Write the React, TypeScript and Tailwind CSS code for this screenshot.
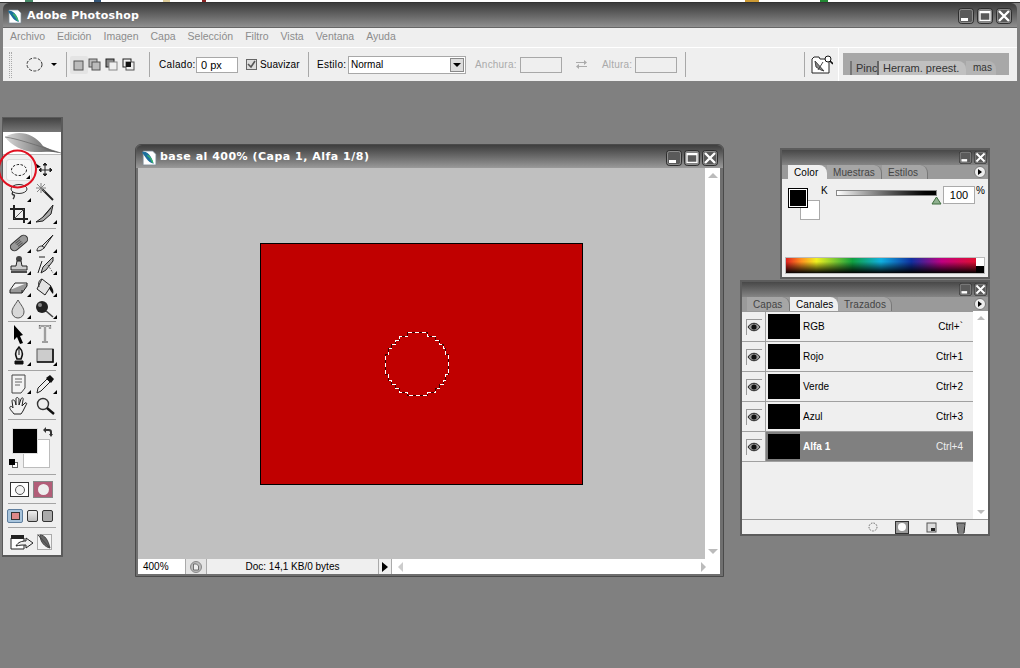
import React from 'react';

const ui = "font-['Liberation_Sans',Arial,sans-serif]";
const menus = ['Archivo', 'Edición', 'Imagen', 'Capa', 'Selección', 'Filtro', 'Vista', 'Ventana', 'Ayuda'];

const channels = [
  { name: 'RGB', key: 'Ctrl+`' },
  { name: 'Rojo', key: 'Ctrl+1' },
  { name: 'Verde', key: 'Ctrl+2' },
  { name: 'Azul', key: 'Ctrl+3' },
  { name: 'Alfa 1', key: 'Ctrl+4', active: true },
];

const WinButton: React.FC<{ kind: 'min' | 'max' | 'close'; size?: number }> = ({ kind, size = 16 }) => (
  <svg width={size} height={size} viewBox="0 0 16 16" className="shrink-0">
    <rect x="0.5" y="0.5" width="15" height="15" rx="3" fill="#5a5a5a" stroke="#2e2e2e" />
    <rect x="1.5" y="1.5" width="13" height="13" rx="2" fill="none" stroke="#8c8c8c" />
    {kind === 'min' && <rect x="3" y="10" width="7" height="3" fill="#fff" />}
    {kind === 'max' && <path d="M3 3.5h10v9H3z M3 4.5h10" fill="none" stroke="#fff" strokeWidth="1.4" />}
    {kind === 'close' && <path d="M3 3l10 10M13 3L3 13" stroke="#fff" strokeWidth="2.4" />}
  </svg>
);

const AppIcon: React.FC<{ size?: number }> = ({ size = 15 }) => (
  <svg width={size} height={size} viewBox="0 0 15 15" className="shrink-0">
    <path d="M2 1h9l3 3v10H2z" fill="#fff" stroke="#7c8c98" strokeWidth="0.7" />
    <path d="M1 2c3-1 6 1 8 4s2 5 3 7c-3-1-5-2-7-5S2 4 1 2z" fill="#1d6f9d" />
    <path d="M6 5c2 1 4 4 5 7" stroke="#39b36a" strokeWidth="1.4" fill="none" />
  </svg>
);

const Tool: React.FC<{ more?: boolean; selected?: boolean; children: React.ReactNode }> = ({ more = true, selected, children }) => (
  <div className={`relative w-[26px] h-[22px] flex items-center justify-center ${selected ? 'bg-[#f7f7f7] border border-[#dcdcdc] rounded-[3px]' : ''}`}>
    <svg width="22" height="20" viewBox="0 0 22 20">{children}</svg>
    {more && <span className="absolute right-[1px] bottom-[1px] w-0 h-0 border-l-[4px] border-l-transparent border-b-[4px] border-b-black" />}
  </div>
);

const Sep: React.FC<{ className: string }> = ({ className }) => <div className={`h-px bg-[#a4a4a4] mx-[2px] ${className}`} />;

const Toolbox = () => (
  <div className="absolute left-[2px] top-[117px] w-[61px] h-[440px] border border-[#5a5a5a] border-r-[2px] border-b-[2px] bg-[#efefef]">
    <div className="h-[14px] bg-gradient-to-b from-[#444] to-[#777]" />
    <div className="h-[23px] bg-white border-b border-[#bbb]">
      <svg width="59" height="23" viewBox="0 0 59 23">
        <defs>
          <linearGradient id="fth" x1="0" x2="1">
            <stop offset="0" stopColor="#d8d8d8" />
            <stop offset="1" stopColor="#4c4c4c" />
          </linearGradient>
        </defs>
        <path d="M2 5C14-2 30 0 40 14c5 3 12 5 18 7C46 19 40 20 32 20 20 20 8 13 2 5z" fill="url(#fth)" />
        <path d="M2 5c14 2 30 8 56 16" stroke="#666" strokeWidth="0.7" fill="none" />
      </svg>
    </div>
    <div className="px-[3px] pt-[4px]">
      <div className="grid grid-cols-2">
        <Tool selected>
          <ellipse cx="11" cy="10" rx="7.5" ry="5.5" fill="none" stroke="#222" strokeDasharray="2.5 1.5" />
        </Tool>
        <Tool more={false}>
          <path d="M1 3l6 4-4 1z" fill="#000" />
          <path d="M11 4v11M6 10h11M11 3l-2 2h4zM11 16l-2-2h4zM5 10l2-2v4zM18 10l-2-2v4z" stroke="#222" fill="#222" strokeWidth="1" />
        </Tool>
        <Tool>
          <ellipse cx="11" cy="7" rx="8" ry="4.5" fill="none" stroke="#333" />
          <path d="M5 10c-2 2 0 3 1 3s0 3-1 4" fill="none" stroke="#333" strokeWidth="1.4" />
        </Tool>
        <Tool more={false}>
          <path d="M8 7l11 11" stroke="#222" strokeWidth="2" />
          <path d="M7 1v10M2 6h10M3 2l8 8M11 2l-8 8" stroke="#777" strokeWidth="0.9" />
        </Tool>
        <Tool>
          <path d="M6 1v14h14M2 5h14v14" fill="none" stroke="#222" strokeWidth="2" />
          <path d="M6 15L16 5" stroke="#555" />
        </Tool>
        <Tool>
          <path d="M2 18l7-5 10-12-2 9-8 7z" fill="#aaa" stroke="#222" />
          <path d="M9 13l8-9" stroke="#222" />
        </Tool>
      </div>
      <Sep className="mt-[3px] mb-[3px]" />
      <div className="grid grid-cols-2">
        <Tool>
          <g transform="rotate(-40 11 10)">
            <rect x="1" y="6" width="20" height="8" rx="4" fill="#999" stroke="#333" />
            <path d="M8 8h6M8 10h6M8 12h6" stroke="#555" />
          </g>
        </Tool>
        <Tool>
          <path d="M3 18c0-4 3-5 5-5l11-11-9 13c-2 2-4 3-7 3z" fill="#ddd" stroke="#222" />
          <path d="M8 13l3 2" stroke="#222" />
        </Tool>
        <Tool>
          <circle cx="11" cy="4" r="3" fill="#444" />
          <path d="M9 6h4l1 5h5v4H3v-4h5z" fill="#ccc" stroke="#222" />
          <path d="M3 17h16" stroke="#222" strokeWidth="1.6" />
        </Tool>
        <Tool>
          <path d="M5 2h6M8 6l-4 12M19 2L9 12l-2 6 5-3 7-9z" fill="#bbb" stroke="#222" />
          <path d="M14 10l5 8" stroke="#555" strokeDasharray="1.5 1.5" />
        </Tool>
        <Tool>
          <path d="M2 13l5-7h12l-5 7z" fill="#f5f5f5" stroke="#222" />
          <path d="M2 13v3h12l5-7V6M14 13v3" fill="#999" stroke="#222" />
        </Tool>
        <Tool>
          <path d="M8 2l9 7-6 9-8-6z" fill="#e4e4e4" stroke="#222" />
          <path d="M8 2C5 3 4 6 5 10" stroke="#222" fill="none" />
          <path d="M17 9c2 3 3 5 2 8-2-2-3-4-4-6z" fill="#111" />
        </Tool>
        <Tool>
          <path d="M10 1c3 5 6 8 6 12a6 6 0 0 1-12 0c0-4 3-7 6-12z" fill="#d8d8d8" stroke="#555" />
        </Tool>
        <Tool>
          <circle cx="8" cy="8" r="6" fill="#222" />
          <circle cx="6" cy="6" r="2" fill="#888" />
          <path d="M12 12l7 6" stroke="#444" strokeWidth="1.6" />
        </Tool>
      </div>
      <Sep className="mt-[1px] mb-[1px]" />
      <div className="grid grid-cols-2">
        <Tool>
          <path d="M6 1l9 10-3 1 3 7-3 1-3-7-3 3z" fill="#000" />
        </Tool>
        <Tool more={false}>
          <path d="M6 5V2h10v3M11 2v15M8 18h6" fill="none" stroke="#666" strokeWidth="2.2" />
          <path d="M6 5V2h10v3M11 2v15M8 18h6" fill="none" stroke="#f4f4f4" strokeWidth="0.8" />
        </Tool>
        <Tool>
          <path d="M11 1c3 3 4 6 3 9l-1 3H9l-1-3c-1-3 0-6 3-9z" fill="none" stroke="#111" strokeWidth="1.6" />
          <path d="M11 1v8M7 15h8v3H7z" fill="#111" stroke="#111" />
        </Tool>
        <Tool>
          <rect x="3" y="3" width="16" height="13" fill="#ccc" stroke="#555" />
          <path d="M19 3v13H3" stroke="#111" strokeWidth="1.6" fill="none" />
        </Tool>
      </div>
      <Sep className="mt-[3px] mb-[2px]" />
      <div className="grid grid-cols-2">
        <Tool>
          <path d="M4 1h13v13l-4 5H4z" fill="#f3f3f3" stroke="#444" />
          <path d="M7 5h7M7 8h7M7 11h5" stroke="#666" />
        </Tool>
        <Tool>
          <path d="M3 19l1-5 9-9 3 3-9 9z" fill="#eee" stroke="#222" />
          <path d="M12 4l4-3 4 4-3 4z" fill="#111" />
        </Tool>
        <Tool more={false}>
          <path d="M6 18c-2-3-5-5-4-7s3 1 3 1L4 5c0-2 2-1 3 0l1 4V3c0-2 2-2 3 0v6l2-6c1-2 3-1 2 1l-1 6 3-3c2-1 2 1 1 2l-3 6-2 3z" fill="#f2f2f2" stroke="#222" />
        </Tool>
        <Tool more={false}>
          <circle cx="9" cy="8" r="5.5" fill="#eee" stroke="#333" strokeWidth="1.4" />
          <path d="M13 12l7 6" stroke="#111" strokeWidth="2.4" />
        </Tool>
      </div>
      <Sep className="mt-[2px] mb-[3px]" />
      <div className="relative h-[50px]">
        <div className="absolute left-[17px] top-[16px] w-[27px] h-[29px] bg-white border border-[#bcbcbc]" />
        <div className="absolute left-[6px] top-[5px] w-[26px] h-[26px] bg-black border border-[#ddd]" />
        <svg className="absolute left-[35px] top-[3px]" width="12" height="12" viewBox="0 0 12 12">
          <path d="M2 4l3-3v2h3a3 3 0 0 1 3 3v2h1l-2 3-2-3h1V6c0-1-1-1-2-1H5v2z" fill="#333" />
        </svg>
        <div className="absolute left-[6px] top-[39px] w-[6px] h-[6px] bg-white border border-[#666]" />
        <div className="absolute left-[3px] top-[36px] w-[6px] h-[6px] bg-black" />
      </div>
      <Sep className="mt-[1px] mb-[6px]" />
      <div className="flex items-center gap-[4px] pl-[4px]">
        <div className="w-[19px] h-[15px] bg-white border border-[#333] flex items-center justify-center">
          <span className="w-[10px] h-[10px] rounded-full border border-[#555] bg-[#f4f4f4]" />
        </div>
        <div className="w-[20px] h-[17px] bg-[#b25d78] border border-[#888] flex items-center justify-center">
          <span className="w-[11px] h-[11px] rounded-full bg-[#eee]" />
        </div>
      </div>
      <Sep className="mt-[5px] mb-[5px]" />
      <div className="flex items-center pl-[1px] h-[14px]">
        <div className="w-[16px] h-[14px] bg-[#a8c4dc] border border-[#5f7f9f] rounded-[2px] flex items-center justify-center">
          <span className="w-[9px] h-[8px] bg-[#d88] border border-[#333]" />
        </div>
        <div className="w-[11px] h-[12px] ml-[4px] rounded-[2px] border border-[#333] bg-gradient-to-b from-[#eee] to-[#bbb]" />
        <div className="w-[11px] h-[12px] ml-[4px] rounded-[2px] border border-[#333] bg-[#aaa]" />
      </div>
      <Sep className="mt-[4px] mb-[6px]" />
      <div className="flex items-center pl-[4px]">
        <svg width="25" height="16" viewBox="0 0 25 16">
          <path d="M1 4h13v11H1z" fill="#fff" stroke="#222" />
          <path d="M1 1h13v4H1z" fill="#222" />
          <path d="M6 12c2-4 6-5 10-5V4l7 5-7 5v-3c-4 0-6 0-10 1z" fill="#eee" stroke="#222" />
        </svg>
        <svg className="ml-[2px]" width="15" height="16" viewBox="0 0 15 16">
          <rect x="0.5" y="0.5" width="14" height="15" fill="#f4f4f4" stroke="#aaa" />
          <path d="M1 1l12 13M3 1c5 0 8 5 10 13C8 13 3 8 3 1z" fill="#666" stroke="#444" />
        </svg>
      </div>
    </div>
  </div>
);

const MenuIcon = () => (
  <span className="w-[12px] h-[12px] rounded-full bg-[#eee] border border-[#777] flex items-center justify-center">
    <span className="w-0 h-0 border-y-[3px] border-y-transparent border-l-[4px] border-l-black" />
  </span>
);

const Tab: React.FC<{ label: string; active?: boolean; width: string }> = ({ label, active, width }) => (
  <div
    className={`${width} h-full flex items-center pl-[6px] text-[10px] tracking-[0.1px] rounded-tr-[8px] ${active ? 'bg-[#efefef] text-black' : 'bg-[#a6a6a6] text-[#444] border-r border-[#777]'}`}
  >
    {label}
  </div>
);

const PanelTitle = () => (
  <div className="h-[15px] bg-gradient-to-b from-[#484848] to-[#858585] flex items-center justify-end gap-[2px] pr-[1px] shrink-0">
    <WinButton kind="min" size={13} />
    <WinButton kind="close" size={13} />
  </div>
);

const ColorPanel = () => (
  <div className="absolute left-[780px] top-[148px] w-[210px] h-[131px] border-2 border-[#5c5c5c] bg-[#efefef] flex flex-col">
    <PanelTitle />
    <div className="h-[14px] bg-[#9a9a9a] flex items-stretch pl-[6px] pr-[2px] shrink-0">
      <Tab label="Color" active width="w-[39px]" />
      <Tab label="Muestras" width="w-[55px]" />
      <Tab label="Estilos" width="w-[46px]" />
      <div className="ml-auto self-center">
        <MenuIcon />
      </div>
    </div>
    <div className="relative flex-1">
      <div className="absolute left-[18px] top-[21px] w-[20px] h-[20px] bg-white border border-[#aaa]" />
      <div className="absolute left-[6px] top-[9px] w-[20px] h-[20px] bg-black border border-black outline outline-1 outline-white -outline-offset-2" />
      <span className="absolute left-[39px] top-[6px] text-[10px] leading-[12px] text-black">K</span>
      <div className="absolute left-[54px] top-[11px] w-[101px] h-[6px] border border-[#888] bg-gradient-to-r from-white to-black" />
      <svg className="absolute left-[149px] top-[17px]" width="11" height="9" viewBox="0 0 11 9">
        <path d="M5.5 1L10 8H1z" fill="#8fb08f" stroke="#3d6d3d" />
      </svg>
      <div className="absolute left-[161px] top-[7px] w-[32px] h-[18px] bg-white border border-[#aaa] text-[11px] leading-[16px] text-center text-black">100</div>
      <span className="absolute left-[194px] top-[6px] text-[10px] leading-[12px] text-black">%</span>
      <div className="absolute left-[3px] top-[78px] w-[200px] h-[17px] border border-[#bbb] flex">
        <div className="flex-1 bg-[linear-gradient(to_bottom,transparent_0%,transparent_25%,rgba(0,0,0,0.97)_100%),linear-gradient(to_right,#e02020,#ff9020_8%,#f0f020_16%,#10a040_35%,#10b0e0_50%,#1030a0_66%,#c00080_82%,#e01030)]" />
        <div className="w-[8px] flex flex-col">
          <div className="flex-1 bg-white" />
          <div className="flex-1 bg-black" />
        </div>
      </div>
    </div>
  </div>
);

const Eye = () => (
  <div className="w-[16px] h-[16px] border-l border-t border-[#999] flex items-center justify-center">
    <svg width="14" height="10" viewBox="0 0 14 10">
      <path d="M1 5c3-5 9-5 12 0-3 5-9 5-12 0z" fill="#999" stroke="#222" />
      <circle cx="7" cy="5" r="2.6" fill="#111" />
    </svg>
  </div>
);

const ChannelsPanel = () => (
  <div className="absolute left-[740px] top-[280px] w-[250px] h-[256px] border-2 border-[#5c5c5c] bg-[#efefef] flex flex-col">
    <PanelTitle />
    <div className="h-[14px] bg-[#9a9a9a] flex items-stretch pl-[5px] pr-[2px] shrink-0">
      <Tab label="Capas" width="w-[43px]" />
      <Tab label="Canales" active width="w-[48px]" />
      <Tab label="Trazados" width="w-[54px]" />
      <div className="ml-auto self-center">
        <MenuIcon />
      </div>
    </div>
    <div className="flex flex-1 min-h-0">
      <div className="flex-1 flex flex-col border-t border-[#999]">
        {channels.map((c) => (
          <div key={c.name} className="h-[30px] flex items-stretch border-b border-[#a0a0a0]">
            <div className="w-[24px] border-r border-[#a0a0a0] flex items-center justify-center">
              <Eye />
            </div>
            <div className={`flex-1 flex items-center text-[10px] pl-[2px] pr-[10px] ${c.active ? 'bg-[#808080] text-white' : 'text-black'}`}>
              <div className="w-[32px] h-[25px] bg-black mr-[3px]" />
              <span className={c.active ? 'font-bold' : ''}>{c.name}</span>
              <span className={`ml-auto ${c.active ? 'text-[#eee]' : ''}`}>{c.key}</span>
            </div>
          </div>
        ))}
      </div>
      <div className="w-[15px] bg-white flex flex-col items-center justify-between pt-[5px] pb-[5px]">
        <span className="w-0 h-0 border-x-[4px] border-x-transparent border-b-[4px] border-b-[#bbb]" />
        <span className="w-0 h-0 border-x-[4px] border-x-transparent border-t-[4px] border-t-[#bbb]" />
      </div>
    </div>
    <div className="h-[15px] border-t border-[#999] flex items-center pl-[126px] shrink-0">
      <svg width="10" height="10" viewBox="0 0 10 10">
        <circle cx="5" cy="5" r="4" fill="none" stroke="#666" strokeDasharray="1.5 1.2" />
      </svg>
      <div className="ml-[17px] w-[14px] h-[13px] bg-[#999] border border-[#333] flex items-center justify-center">
        <span className="w-[8px] h-[8px] rounded-full bg-white" />
      </div>
      <svg className="ml-[17px]" width="11" height="11" viewBox="0 0 11 11">
        <rect x="1" y="1" width="9" height="9" fill="#ddd" stroke="#555" />
        <rect x="5" y="6" width="4" height="3" fill="#222" />
      </svg>
      <svg className="ml-[18px]" width="12" height="13" viewBox="0 0 12 13">
        <path d="M2 3h8l-1 9H3z" fill="#ddd" stroke="#222" />
        <path d="M1 2h10M4 4v7M6 4v7M8 4v7" stroke="#222" />
      </svg>
    </div>
  </div>
);

const DocWindow = () => (
  <div className="absolute left-[135px] top-[144px] w-[589px] h-[433px] rounded-t-[6px] border border-[#4a4a4a] bg-[#6f6f6f] pl-[2px] pr-[3px] pb-[2px] flex flex-col">
    <div className="h-[23px] -ml-[2px] -mr-[3px] pt-[2px] rounded-t-[6px] bg-gradient-to-b from-[#3e3e3e] to-[#9a9a9a] flex items-center pl-[5px] pr-[5px] shrink-0">
      <AppIcon size={16} />
      <span className="ml-[3px] text-[11px] font-bold tracking-[0.5px] text-white font-['DejaVu_Sans',sans-serif]">
        base al 400% (Capa 1, Alfa 1/8)
      </span>
      <div className="ml-auto flex gap-[2px]">
        <WinButton kind="min" />
        <WinButton kind="max" />
        <WinButton kind="close" />
      </div>
    </div>
    <div className="flex flex-1 min-h-0">
      <div className="flex-1 bg-[#c0c0c0] flex items-center justify-center">
        <div className="relative w-[323px] h-[242px] bg-[#c00000] border border-black">
          {/* 4x pixels, so the selection steps instead of being a smooth circle */}
          <svg className="absolute left-[123px] top-[87px]" width="67" height="67" viewBox="0 0 67 67" shapeRendering="crispEdges">
            <g transform="translate(0.5 0.5)" fill="none">
              <path d="M23 1H43V5H51V9H55V13H59V17H61V23H64V43H61V49H59V53H55V57H51V61H43V64H23V61H15V57H11V53H7V49H4V43H1V23H4V17H7V13H11V9H15V5H23Z" stroke="#400000" />
              <path d="M23 1H43V5H51V9H55V13H59V17H61V23H64V43H61V49H59V53H55V57H51V61H43V64H23V61H15V57H11V53H7V49H4V43H1V23H4V17H7V13H11V9H15V5H23Z" stroke="#fff" strokeDasharray="4 3" />
            </g>
          </svg>
        </div>
      </div>
      <div className="w-[15px] bg-white flex flex-col items-center justify-between py-[5px]">
        <span className="w-0 h-0 border-x-[5px] border-x-transparent border-b-[5px] border-b-[#bbb]" />
        <span className="w-0 h-0 border-x-[5px] border-x-transparent border-t-[5px] border-t-[#bbb]" />
      </div>
    </div>
    <div className="h-[15px] flex items-stretch text-[10px] text-black shrink-0 bg-white">
      <div className="w-[47px] bg-white pl-[5px] leading-[15px]">400%</div>
      <div className="w-[22px] bg-[#e4e4e4] border-x border-[#aaa] flex items-center justify-center">
        <svg width="12" height="12" viewBox="0 0 12 12">
          <circle cx="6" cy="6" r="5.500" fill="#bbb" stroke="#888" />
          <path d="M3.500 3h3l2 2v4h-5z" fill="#eee" stroke="#555" strokeWidth="0.8" />
        </svg>
      </div>
      <div className="w-[171px] bg-[#efefef] text-center leading-[15px]">Doc: 14,1 KB/0 bytes</div>
      <div className="w-[14px] bg-[#efefef] border-x border-[#aaa] flex items-center justify-center">
        <span className="w-0 h-0 border-y-[5px] border-y-transparent border-l-[6px] border-l-black" />
      </div>
      <div className="flex-1 bg-white flex items-center justify-between px-[6px]">
        <span className="w-0 h-0 border-y-[5px] border-y-transparent border-r-[5px] border-r-[#ccc]" />
        <span className="w-0 h-0 border-y-[5px] border-y-transparent border-l-[5px] border-l-[#bbb] mr-[8px]" />
      </div>
    </div>
  </div>
);

const VSep: React.FC<{ className?: string }> = ({ className = '' }) => <div className={`w-px h-[25px] bg-[#a8a8a8] shrink-0 ${className}`} />;

const OptionsBar = () => (
  <div className={`h-[33px] bg-[#efefef] flex items-center text-[10px] text-black ${ui}`}>
    <div className="ml-[6px] w-[3px] h-[26px] border-x border-dotted border-[#aaa] shrink-0" />
    <svg className="ml-[14px] shrink-0" width="17" height="15" viewBox="0 0 17 15">
      <ellipse cx="8.5" cy="7.5" rx="7.5" ry="6.5" fill="none" stroke="#333" strokeDasharray="3 1.5" />
    </svg>
    <span className="ml-[8px] w-0 h-0 border-x-[3px] border-x-transparent border-t-[3px] border-t-black shrink-0" />
    <VSep className="ml-[9px]" />
    <svg className="ml-[3px] shrink-0" width="66" height="18" viewBox="0 0 66 18">
      <rect x="0" y="0" width="18" height="18" rx="2" fill="#e4e4e4" />
      <rect x="4" y="5" width="9" height="9" fill="#bbb" stroke="#555" />
      <rect x="19" y="3" width="8" height="8" fill="#bbb" stroke="#555" />
      <rect x="22" y="6" width="8" height="8" fill="#bbb" stroke="#555" />
      <rect x="36" y="3" width="8" height="8" fill="#888" stroke="#222" />
      <rect x="39" y="6" width="8" height="8" fill="#efefef" stroke="#888" />
      <rect x="53" y="3" width="8" height="8" fill="#efefef" stroke="#222" />
      <rect x="56" y="6" width="8" height="8" fill="#efefef" stroke="#555" />
      <rect x="56" y="6" width="5" height="5" fill="#111" />
    </svg>
    <VSep className="ml-[13px]" />
    <span className="ml-[9px] w-[35px] tracking-[0.3px] shrink-0">Calado:</span>
    <div className="ml-[2px] w-[42px] h-[16px] bg-white border border-[#a8a8a8] pl-[4px] leading-[14px] text-[11px] shrink-0">0 px</div>
    <div className="ml-[8px] w-[11px] h-[11px] border border-[#666] bg-[#ddd] flex items-center justify-center shrink-0">
      <svg width="9" height="9" viewBox="0 0 9 9">
        <path d="M1 4l3 3 4-6" fill="none" stroke="#555" strokeWidth="1.6" />
      </svg>
    </div>
    <span className="ml-[3px] w-[37px] tracking-[0.1px] shrink-0">Suavizar</span>
    <VSep className="ml-[11px]" />
    <span className="ml-[8px] w-[26px] tracking-[0.3px] shrink-0">Estilo:</span>
    <div className="ml-[5px] w-[118px] h-[18px] bg-white border border-[#a8a8a8] pl-[2px] flex items-center justify-between text-[10px] shrink-0">
      Normal
      <span className="w-[14px] h-[14px] mr-[1px] bg-[#ddd] border border-[#888] flex items-center justify-center">
        <span className="w-0 h-0 border-x-[4px] border-x-transparent border-t-[4px] border-t-black" />
      </span>
    </div>
    <span className="ml-[9px] w-[42px] text-[#aaa] tracking-[0.2px] shrink-0">Anchura:</span>
    <div className="ml-[3px] w-[42px] h-[16px] bg-[#efefef] border border-[#a8a8a8] shrink-0" />
    <svg className="ml-[14px] shrink-0" width="11" height="11" viewBox="0 0 11 11">
      <path d="M0 3h8V1l3 2.500-3 2.500V4H0zM11 8H3v2L0 7.500 3 5v2h8z" fill="#aaa" />
    </svg>
    <span className="ml-[15px] w-[29px] text-[#aaa] tracking-[0.2px] shrink-0">Altura:</span>
    <div className="ml-[4px] w-[42px] h-[16px] bg-[#efefef] border border-[#a8a8a8] shrink-0" />
    <VSep className="ml-[8px]" />
    <div className="w-[118px] shrink-0" />
    <VSep />
    <svg className="ml-[6px] shrink-0" width="22" height="20" viewBox="0 0 22 20">
      <path d="M1 4l2-2h5l1 2h9v14H1z" fill="#fff" stroke="#222" />
      <path d="M4 6l9 10-3-1-5-3zM12 7l-5 8" stroke="#444" fill="#888" />
      <circle cx="17" cy="4" r="3" fill="#fff" stroke="#111" />
      <path d="M19 6l3 3" stroke="#111" strokeWidth="1.6" />
    </svg>
    <div className="ml-[5px] w-px h-[33px] bg-white shrink-0" />
    <div className="ml-[4px] w-[166px] h-[22px] bg-[#a8a8a8] self-start mt-[5px] flex items-end pl-[7px] text-[11px] text-[#333] relative overflow-hidden shrink-0">
      <div className="w-[27px] h-[14px] border-l-2 border-[#777] pl-[4px] leading-[14px] bg-[#a8a8a8]">Pinc</div>
      <div className="w-[89px] h-[14px] border-l-2 border-[#666] pl-[4px] leading-[14px] bg-[#c0c0c0] rounded-tr-[8px] whitespace-nowrap">Herram. preest.</div>
      <div className="w-[30px] h-[14px] pl-[7px] leading-[14px] bg-[#b4b4b4] rounded-tr-[8px] text-[10px]">mas</div>
    </div>
  </div>
);

const App: React.FC = () => (
  <div className={`relative w-[1020px] h-[668px] overflow-hidden bg-[#808080] ${ui}`}>
    <svg className="block" width="1020" height="3" viewBox="0 0 1020 3">
      <rect width="1020" height="2" fill="#fff" />
      <rect width="1020" height="1" y="2" fill="#333" />
      <rect x="25" width="8" height="2" fill="#486" />
      <rect x="94" width="7" height="2" fill="#357" />
      <rect x="163" width="7" height="2" fill="#dc9" />
      <rect x="202" width="4" height="2" fill="#822" />
      <rect x="745" width="14" height="2" fill="#c93" />
      <rect x="820" width="8" height="2" fill="#283" />
    </svg>
    <div className="ml-[3px] mr-[3px] rounded-t-[6px] overflow-hidden">
      <div className="h-[24px] pt-[2px] bg-gradient-to-b from-[#3c3c3c] to-[#8f8f8f] flex items-center pl-[4px] pr-[5px]">
        <AppIcon />
        <span className="ml-[5px] text-[11px] font-bold tracking-[0.2px] text-white font-['DejaVu_Sans',sans-serif]">Adobe Photoshop</span>
        <div className="ml-auto flex gap-[3px]">
          <WinButton kind="min" />
          <WinButton kind="max" />
          <WinButton kind="close" />
        </div>
      </div>
      <div className="h-[20px] pb-[2px] bg-[#efefef] flex items-center pl-[7px] gap-[12px] text-[10.5px] text-[#8c8c8c] border-t border-[#666]">
        {menus.map((m) => (
          <span key={m}>{m}</span>
        ))}
      </div>
      <div className="h-px bg-white" />
      <OptionsBar />
    </div>
    <Toolbox />
    <svg className="absolute left-0 top-[149px] pointer-events-none" width="38" height="40" viewBox="0 0 38 40">
      <circle cx="17.500" cy="20" r="18.500" fill="none" stroke="#e01020" strokeWidth="2" />
    </svg>
    <DocWindow />
    <ColorPanel />
    <ChannelsPanel />
  </div>
);

export default App;
